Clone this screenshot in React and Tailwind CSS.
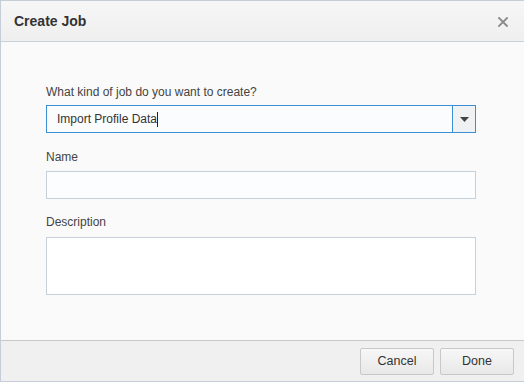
export default function App() {
  return (
    <div
      className="w-[524px] h-[382px] flex flex-col border-l border-t border-b border-[#c5ced8] bg-[#fafafa] text-[#333]"
      style={{ fontFamily: '"Liberation Sans", Arial, sans-serif' }}
    >
      {/* Header */}
      <div className="h-[41px] shrink-0 flex items-center justify-between pl-[13px] pr-[16px] border-b border-[#c9d1d9] bg-gradient-to-b from-[#f6f6f6] to-[#efefef]">
        <span className="text-[14px] font-bold text-[#333]">Create Job</span>
        <svg width="10" height="10" viewBox="0 0 10 10" className="mt-[1px]">
          <path d="M1 1 L9 9 M9 1 L1 9" stroke="#8a8a8a" strokeWidth="1.8" strokeLinecap="square" />
        </svg>
      </div>

      {/* Body */}
      <div className="flex-1 flex flex-col pt-[42px] pl-[45px] pr-[48px]">
        <label className="text-[12px] leading-[16px] text-[#444]">What kind of job do you want to create?</label>
        <div className="mt-[5px] h-[28px] flex border border-[#3a8fd5] bg-[#fbfcfd]">
          <div className="flex-1 flex items-center pl-[10px] text-[12px] text-[#333]">
            Import Profile Data<span className="inline-block w-[1px] h-[15px] bg-[#222]" />
          </div>
          <div className="w-[23px] flex items-center justify-center border-l border-[#3a8fd5] bg-[#f0f1f2]">
            <svg width="9" height="5" viewBox="0 0 9 5">
              <path d="M0 0 H9 L4.5 5 Z" fill="#444" />
            </svg>
          </div>
        </div>

        <label className="mt-[16px] text-[12px] leading-[16px] text-[#444]">Name</label>
        <div className="mt-[6px] h-[28px] border border-[#c5d0db] bg-[#fcfdfe]" />

        <label className="mt-[15px] text-[12px] leading-[16px] text-[#444]">Description</label>
        <div className="mt-[7px] h-[58px] border border-[#c5d0db] bg-white" />
      </div>

      {/* Footer */}
      <div className="h-[41px] shrink-0 flex items-center justify-end gap-[6px] pr-[10px] border-t border-[#c8c8c8] bg-[#f0f0f0]">
        <button className="w-[74px] h-[27px] rounded-[2px] border border-[#c6c9cc] bg-gradient-to-b from-[#f7f7f7] to-[#e8e8e8] text-[12.5px] text-[#333]">
          Cancel
        </button>
        <button className="w-[74px] h-[27px] rounded-[2px] border border-[#c6c9cc] bg-gradient-to-b from-[#f7f7f7] to-[#e8e8e8] text-[12.5px] text-[#333]">
          Done
        </button>
      </div>
    </div>
  );
}
